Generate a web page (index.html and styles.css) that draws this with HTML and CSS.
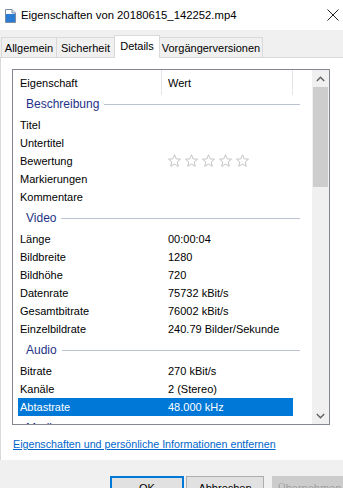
FILE: index.html
```html
<!DOCTYPE html>
<html lang="de">
<head>
<meta charset="utf-8">
<title>Eigenschaften</title>
<link rel="stylesheet" href="styles.css">
</head>
<body>
<div class="window">
  <div class="titlebar">
    <svg class="ticon" width="12" height="14" viewBox="0 0 12 14">
      <path d="M1.5 0.5 H8 L11.5 4 V13.5 H1.5 Z" fill="#fff" stroke="#7a8aa0"/>
      <rect x="2" y="5" width="9" height="8" fill="#2b7cd3"/>
      <path d="M8 0.5 V4 H11.5" fill="#dfe6ee" stroke="#7a8aa0"/>
    </svg>
    <span class="ttext">Eigenschaften von 20180615_142252.mp4</span>
    <svg class="close" width="12" height="12" viewBox="0 0 12 12">
      <path d="M0.5 0.5 L11.5 11.5 M11.5 0.5 L0.5 11.5" stroke="#222" stroke-width="1"/>
    </svg>
  </div>
  <div class="dialog">
    <div class="tabs">
      <div class="tab t1">Allgemein</div>
      <div class="tab t2">Sicherheit</div>
      <div class="tab active t3">Details</div>
      <div class="tab t4">Vorgängerversionen</div>
    </div>
    <div class="page">
      <div class="listbox">
        <div class="list">
          <div class="header">
            <div class="hcell h1">Eigenschaft</div>
            <div class="hcell h2">Wert</div>
          </div>
          <div class="group"><span>Beschreibung</span><i></i></div>
          <div class="row"><span>Titel</span><span></span></div>
          <div class="row"><span>Untertitel</span><span></span></div>
          <div class="row"><span>Bewertung</span><span class="stars">
            <svg width="84" height="14" viewBox="0 0 84 14">
              <g fill="none" stroke="#c4c4c4" stroke-width="1">
                <polygon points="6.5,0.8 8.2,4.9 12.5,5.2 9.2,8 10.3,12.3 6.5,10 2.7,12.3 3.8,8 0.5,5.2 4.8,4.9"/>
                <polygon transform="translate(17 0)" points="6.5,0.8 8.2,4.9 12.5,5.2 9.2,8 10.3,12.3 6.5,10 2.7,12.3 3.8,8 0.5,5.2 4.8,4.9"/>
                <polygon transform="translate(34 0)" points="6.5,0.8 8.2,4.9 12.5,5.2 9.2,8 10.3,12.3 6.5,10 2.7,12.3 3.8,8 0.5,5.2 4.8,4.9"/>
                <polygon transform="translate(51 0)" points="6.5,0.8 8.2,4.9 12.5,5.2 9.2,8 10.3,12.3 6.5,10 2.7,12.3 3.8,8 0.5,5.2 4.8,4.9"/>
                <polygon transform="translate(68 0)" points="6.5,0.8 8.2,4.9 12.5,5.2 9.2,8 10.3,12.3 6.5,10 2.7,12.3 3.8,8 0.5,5.2 4.8,4.9"/>
              </g>
            </svg></span></div>
          <div class="row"><span>Markierungen</span><span></span></div>
          <div class="row"><span>Kommentare</span><span></span></div>
          <div class="group"><span>Video</span><i></i></div>
          <div class="row"><span>Länge</span><span>00:00:04</span></div>
          <div class="row"><span>Bildbreite</span><span>1280</span></div>
          <div class="row"><span>Bildhöhe</span><span>720</span></div>
          <div class="row"><span>Datenrate</span><span>75732 kBit/s</span></div>
          <div class="row"><span>Gesamtbitrate</span><span>76002 kBit/s</span></div>
          <div class="row"><span>Einzelbildrate</span><span>240.79 Bilder/Sekunde</span></div>
          <div class="group"><span>Audio</span><i></i></div>
          <div class="row"><span>Bitrate</span><span>270 kBit/s</span></div>
          <div class="row"><span>Kanäle</span><span>2 (Stereo)</span></div>
          <div class="row selected"><span>Abtastrate</span><span>48.000 kHz</span></div>
          <div class="group"><span>Medien</span><i></i></div>
        </div>
        <div class="scrollbar">
          <div class="sbtn">
            <svg width="9" height="6" viewBox="0 0 9 6"><path d="M0.8 5 L4.5 1.3 L8.2 5" fill="none" stroke="#606060" stroke-width="1.4"/></svg>
          </div>
          <div class="thumb"></div>
          <div class="track"></div>
          <div class="sbtn">
            <svg width="9" height="6" viewBox="0 0 9 6"><path d="M0.8 1 L4.5 4.7 L8.2 1" fill="none" stroke="#606060" stroke-width="1.4"/></svg>
          </div>
        </div>
      </div>
      <a class="link" href="#">Eigenschaften und persönliche Informationen entfernen</a>
    </div>
    <div class="buttons">
      <div class="btn default">OK</div>
      <div class="btn">Abbrechen</div>
      <div class="btn disabled">Übernehmen</div>
    </div>
  </div>
</div>
</body>
</html>
```
FILE: styles.css
```css
* { box-sizing: border-box; }
html, body { margin: 0; padding: 0; background: #fff; }
body {
  width: 343px;
  height: 488px;
  overflow: hidden;
  font-family: "Liberation Sans", Arial, sans-serif;
  font-size: 11px;
  color: #000;
}
.window { width: 343px; height: 488px; display: flex; flex-direction: column; }
.titlebar {
  height: 30px;
  flex: none;
  background: #fff;
  display: flex;
  align-items: center;
  padding-left: 4px;
  padding-right: 4px;
}
.ticon { margin-right: 5px; margin-top: 1px; }
.ttext { font-size: 11.3px; flex: 1; color: #000; }
.dialog { flex: 1; background: #f0f0f0; display: flex; flex-direction: column; }
.tabs {
  height: 27px;
  flex: none;
  display: flex;
  align-items: flex-end;
  padding-left: 1px;
}
.tab {
  height: 20px;
  border: 1px solid #d9d9d9;
  border-bottom: none;
  background: #f0f0f0;
  display: flex;
  align-items: center;
  justify-content: center;
  margin-right: -1px;
}
.t1 { width: 56px; }
.t2 { width: 59px; }
.t3 { width: 46px; }
.t4 { width: 104px; }
.tab.active {
  height: 23px;
  background: #fff;
  position: relative;
  z-index: 1;
  margin-bottom: -1px;
  padding-bottom: 3px;
}
.page {
  height: 403px;
  flex: none;
  background: #fff;
  border-top: 1px solid #d9d9d9;
  border-left: 1px solid #d9d9d9;
  padding: 11px 0 0 11px;
}
.listbox {
  width: 318px;
  height: 356px;
  border: 1px solid #828790;
  display: flex;
  overflow: hidden;
}
.list { flex: 1; overflow: hidden; }
.header {
  height: 22px;
  display: flex;
}
.hcell {
  display: flex;
  align-items: center;
  height: 25px;
  border-right: 1px solid #e5e5e5;
}
.h1 { width: 149px; padding-left: 7px; }
.h2 { width: 131px; padding-left: 6px; }
.group {
  height: 24px;
  margin-left: 5px;
  width: 282px;
  display: flex;
  align-items: center;
  padding-left: 8px;
  color: #1e3287;
  font-size: 12px;
}
.group i {
  flex: 1;
  height: 1px;
  background: #bcc3d0;
  margin-left: 5px;
}
.row {
  height: 18px;
  margin-left: 5px;
  width: 275px;
  display: grid;
  grid-template-columns: 143px 1fr;
  align-items: center;
}
.row span:first-child { padding-left: 2px; }
.row span:last-child { padding-left: 7px; }
.stars { display: flex; align-items: center; }
.stars svg { display: block; }
.row.selected { background: #0078d7; color: #fff; }
.scrollbar {
  width: 17px;
  flex: none;
  display: flex;
  flex-direction: column;
  background: #f0f0f0;
}
.sbtn {
  height: 17px;
  flex: none;
  display: flex;
  align-items: center;
  justify-content: center;
}
.thumb { height: 100px; flex: none; background: #cdcdcd; margin: 0 1px; }
.track { flex: 1; }
.link {
  display: block;
  margin-top: 11px;
  margin-left: 1px;
  color: #0066cc;
  text-decoration: underline;
  font-size: 10.7px;
  line-height: 16px;
}
.buttons {
  flex: 1;
  display: flex;
  padding-top: 16px;
  padding-left: 110px;
}
.btn {
  height: 23px;
  border: 1px solid #adadad;
  background: #e1e1e1;
  display: flex;
  align-items: center;
  justify-content: center;
  flex: none;
}
.btn:nth-child(1) { width: 74px; margin-right: 2px; }
.btn:nth-child(2) { width: 78px; margin-right: 8px; }
.btn:nth-child(3) { width: 75px; }
.btn.default { border: 2px solid #0078d7; }
.btn.disabled { color: #a0a0a0; border-color: #cccccc; background: #cccccc; }
```
